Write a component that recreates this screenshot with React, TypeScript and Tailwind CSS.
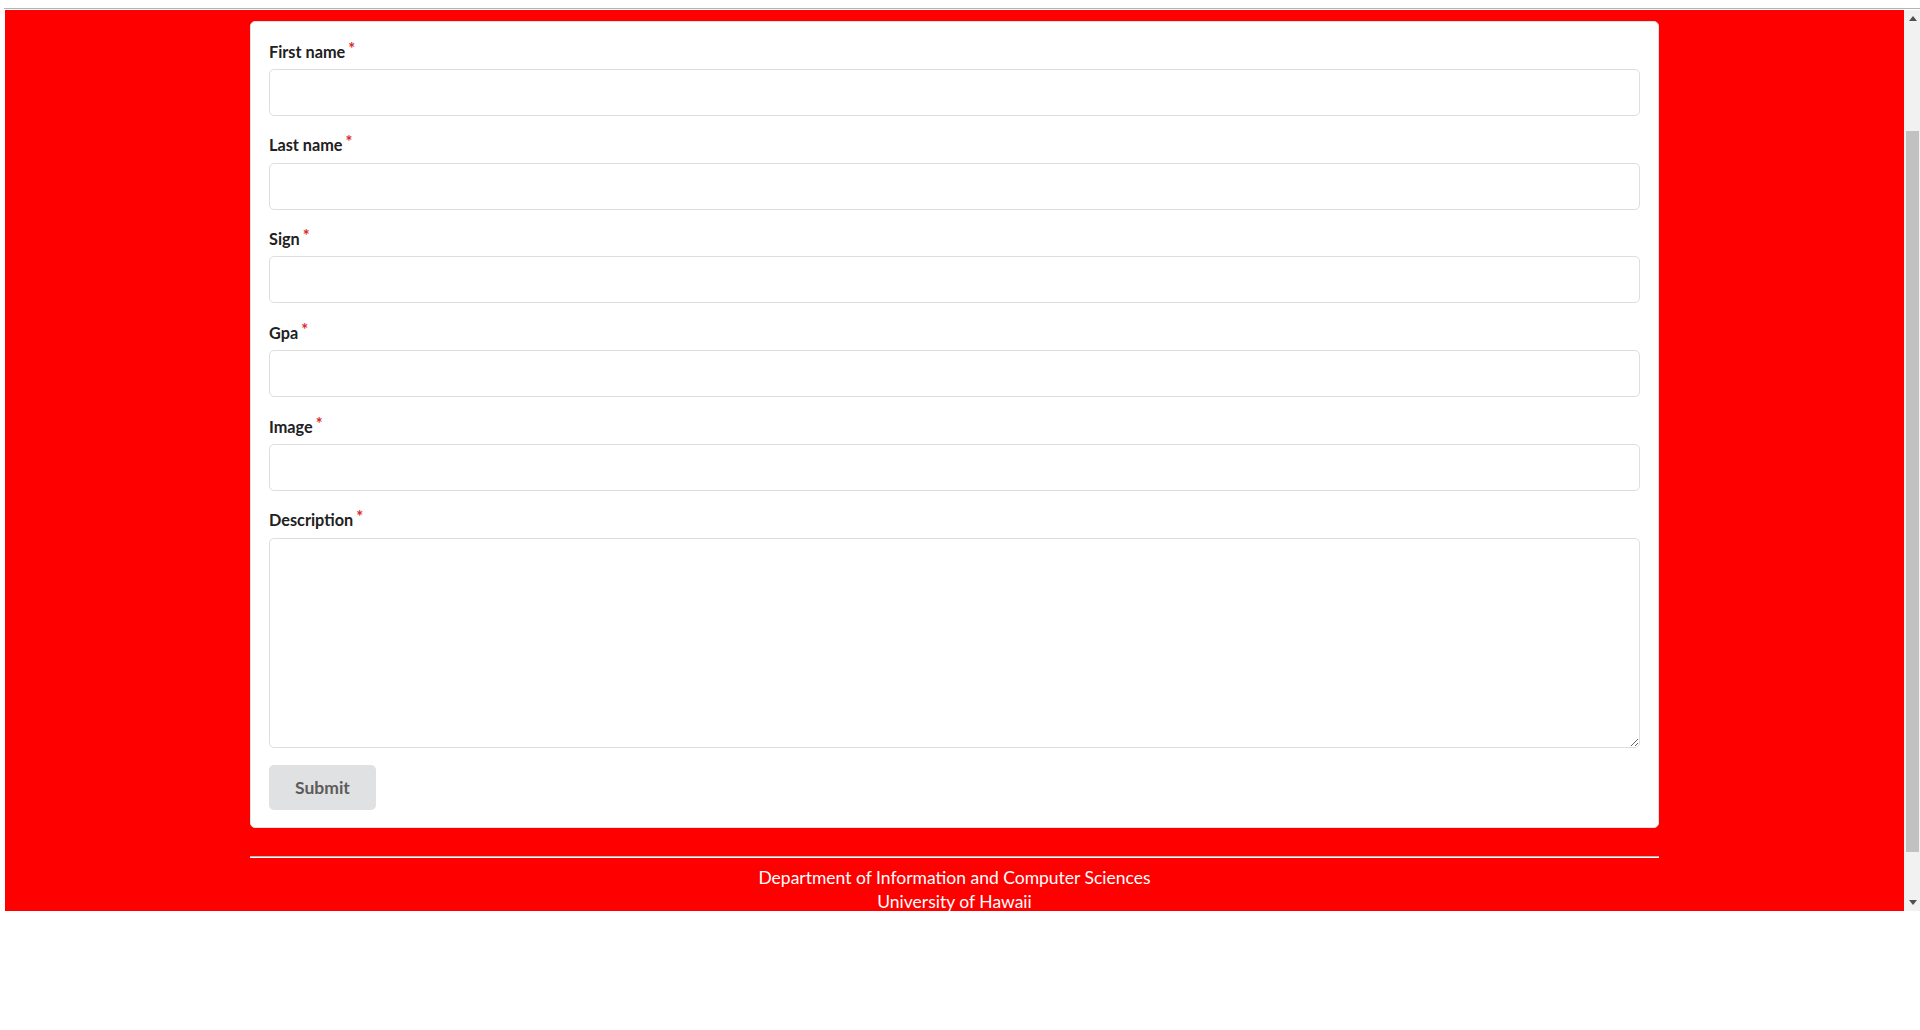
import React from "react"

const fields = ["First name", "Last name", "Sign", "Gpa", "Image"]

function FieldLabel({ text }: { text: string }) {
    return (
        <label className="block text-[16.25px] font-bold leading-[24.3px] text-[#212121] mb-[5px]">
            {text}
            <span className="inline-block align-top -mt-[3px] ml-[3px] text-[#db2828]">*</span>
        </label>
    )
}

function Scrollbar() {
    return (
        <div className="w-[16px] h-full bg-[#f1f1f1] flex flex-col">
            <div className="h-[17px] flex items-center justify-center pl-[2px]">
                <div className="w-0 h-0 border-l-[4px] border-r-[4px] border-b-[5px] border-l-transparent border-r-transparent border-b-[#505050]" />
            </div>
            <div className="h-[104px]" />
            <div className="h-[721px] ml-[2px] mr-[1px] bg-[#c1c1c1]" />
            <div className="flex-1" />
            <div className="h-[17px] flex items-center justify-center pl-[2px]">
                <div className="w-0 h-0 border-l-[4px] border-r-[4px] border-t-[5px] border-l-transparent border-r-transparent border-t-[#505050]" />
            </div>
        </div>
    )
}

export default function App() {
    return (
        <div className="min-h-[1030px] bg-white pt-[8px] pl-[4px] font-['Lato','Liberation_Sans',sans-serif]">
            <div className="border-t border-[#b4b4b4] pt-[1px] pl-[1px]">
                <div className="flex h-[901px]">
                    <div className="flex-1 bg-[#ff0000] overflow-hidden pt-[11px]">
                        <div className="w-[1409px] mx-auto">
                            <form className="bg-white rounded-[5px] border border-[#e2e2e2] px-[18px] pt-[17.5px] pb-[17px]">
                                {fields.map((f) => (
                                    <div key={f} className="mb-[17.5px]">
                                        <FieldLabel text={f} />
                                        <input
                                            type="text"
                                            className="block w-full h-[47px] border border-[#dededf] rounded-[5px] px-[17.5px] text-[17.5px] outline-none"
                                        />
                                    </div>
                                ))}
                                <div className="mb-[17px]">
                                    <FieldLabel text="Description" />
                                    <textarea className="block w-full h-[210px] border border-[#dededf] rounded-[5px] px-[17.5px] py-[12px] text-[17.5px] outline-none resize-y" />
                                </div>
                                <button
                                    type="button"
                                    className="h-[45px] px-[26px] rounded-[5px] bg-[#e0e1e2] text-[17.5px] font-bold text-[#5c5c5c] leading-none"
                                >
                                    Submit
                                </button>
                            </form>
                            <div className="mt-[28.5px] border-t border-t-[#b9b9b9] border-b border-b-[#f6f6f6]" />
                            <div className="pt-[7.5px] text-center text-white text-[17.5px] leading-[24px]">
                                <div>Department of Information and Computer Sciences</div>
                                <div>University of Hawaii</div>
                            </div>
                        </div>
                    </div>
                    <Scrollbar />
                </div>
            </div>
        </div>
    )
}
